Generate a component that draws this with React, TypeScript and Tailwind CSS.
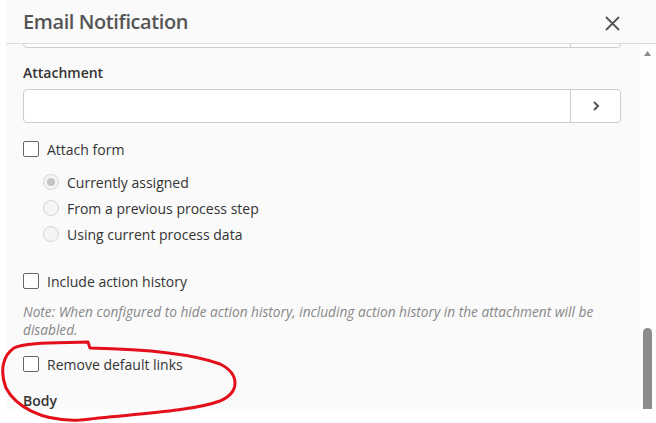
import { useState } from 'react'

const font = { fontFamily: '"Open Sans", "Noto Sans", sans-serif' }

function Checkbox({ label, checked, onToggle }: { label: string; checked: boolean; onToggle: () => void }) {
  return (
    <label className="flex items-center h-[20px] gap-[8px] cursor-pointer select-none">
      <span
        className={`w-[16px] h-[16px] rounded-[2px] border flex items-center justify-center ${
          checked ? 'border-[#555] bg-[#555]' : 'border-[#666] bg-white'
        }`}
      >
        {checked && (
          <svg width="10" height="10" viewBox="0 0 24 24" fill="none" stroke="white" strokeWidth={3}>
            <path d="M5 13l4 4L19 7" />
          </svg>
        )}
      </span>
      <input type="checkbox" className="hidden" checked={checked} onChange={onToggle} />
      <span className="text-[14px] text-[#333]">{label}</span>
    </label>
  )
}

function Radio({ label, checked }: { label: string; checked: boolean }) {
  return (
    <div className="flex items-center h-[20px] gap-[8px] select-none">
      <span className="w-[16px] h-[16px] rounded-full border border-[#d4d4d4] bg-[#f5f5f5] flex items-center justify-center">
        {checked && <span className="w-[8px] h-[8px] rounded-full bg-[#c4c4c4]" />}
      </span>
      <span className="text-[14px] text-[#333]">{label}</span>
    </div>
  )
}

function PickerInput({ className = '' }: { className?: string }) {
  return (
    <div className={`flex h-[34px] border border-[#ccc] rounded-[4px] bg-white ${className}`}>
      <div className="flex-1" />
      <div className="w-[50px] border-l border-[#ccc] flex items-center justify-center">
        <svg width="10" height="12" viewBox="0 0 10 12" fill="none" stroke="#555" strokeWidth={2}>
          <path d="M3 2 L7 6 L3 10" />
        </svg>
      </div>
    </div>
  )
}

export default function App() {
  const [attachForm, setAttachForm] = useState(false)
  const [history, setHistory] = useState(false)
  const [removeLinks, setRemoveLinks] = useState(false)

  return (
    <div className="relative w-[656px] h-[423px] bg-white overflow-hidden" style={font}>
      <div className="ml-[6px] w-[650px] h-[409px] bg-[#fafafa] flex flex-col">
        {/* Header */}
        <header className="h-[44px] shrink-0 border-b border-[#ddd] flex items-center justify-between pl-[17px] pr-[36px]">
          <h2 className="text-[20px] font-semibold text-[#555] tracking-[-0.4px] leading-none mt-[1px]">
            Email Notification
          </h2>
          <svg width="15" height="15" viewBox="0 0 15 15" stroke="#555" strokeWidth={1.8} className="mt-[3px]">
            <path d="M1 1 L14 14 M14 1 L1 14" />
          </svg>
        </header>

        <div className="flex-1 flex overflow-hidden">
          {/* Scrolled content */}
          <div className="w-[634px] pl-[17px] pr-[19px] overflow-hidden">
            <PickerInput className="mt-[-30px]" />

            <div className="mt-[15px] h-[20px] text-[14px] font-semibold text-[#333] leading-[20px]">Attachment</div>
            <PickerInput className="mt-[6px]" />

            <div className="mt-[16px]">
              <Checkbox label="Attach form" checked={attachForm} onToggle={() => setAttachForm(!attachForm)} />
            </div>

            <div className="mt-[13px] pl-[20px] flex flex-col gap-[6px]">
              <Radio label="Currently assigned" checked />
              <Radio label="From a previous process step" checked={false} />
              <Radio label="Using current process data" checked={false} />
            </div>

            <div className="mt-[27px]">
              <Checkbox label="Include action history" checked={history} onToggle={() => setHistory(!history)} />
            </div>

            <p className="mt-[12px] text-[13.7px] italic text-[#888] leading-[18px]">
              Note: When configured to hide action history, including action history in the attachment will be disabled.
            </p>

            <div className="mt-[15px]">
              <Checkbox label="Remove default links" checked={removeLinks} onToggle={() => setRemoveLinks(!removeLinks)} />
            </div>

            <div className="mt-[17px] h-[20px] text-[14px] font-semibold text-[#333] leading-[20px]">Body</div>
          </div>

          {/* Scrollbar */}
          <div className="w-[16px] bg-[#fdfdfd] flex flex-col items-center">
            <svg width="7" height="5" viewBox="0 0 7 5" className="mt-[7px] ml-[-1px]">
              <path d="M0 5 L3.5 0 L7 5 Z" fill="#8a8a8a" />
            </svg>
            <div className="mt-[272px] ml-[-2px] w-[9px] flex-1 rounded-t-full bg-[#8c8c8c]" />
          </div>
        </div>
      </div>

      {/* Hand-drawn annotation */}
      <svg className="absolute inset-0 pointer-events-none" width="656" height="423" viewBox="0 0 656 423">
        <path
          d="M90 348 C140 349, 190 353, 220 364 C240 374, 240 392, 220 401 C190 412, 130 414, 80 420 C40 422, 15 405, 6 388 C0 372, 2 356, 14 348 C24 342, 60 343, 88 342 L90 348"
          fill="none"
          stroke="#e3101b"
          strokeWidth={3}
          strokeLinecap="round"
          strokeLinejoin="round"
        />
      </svg>
    </div>
  )
}
